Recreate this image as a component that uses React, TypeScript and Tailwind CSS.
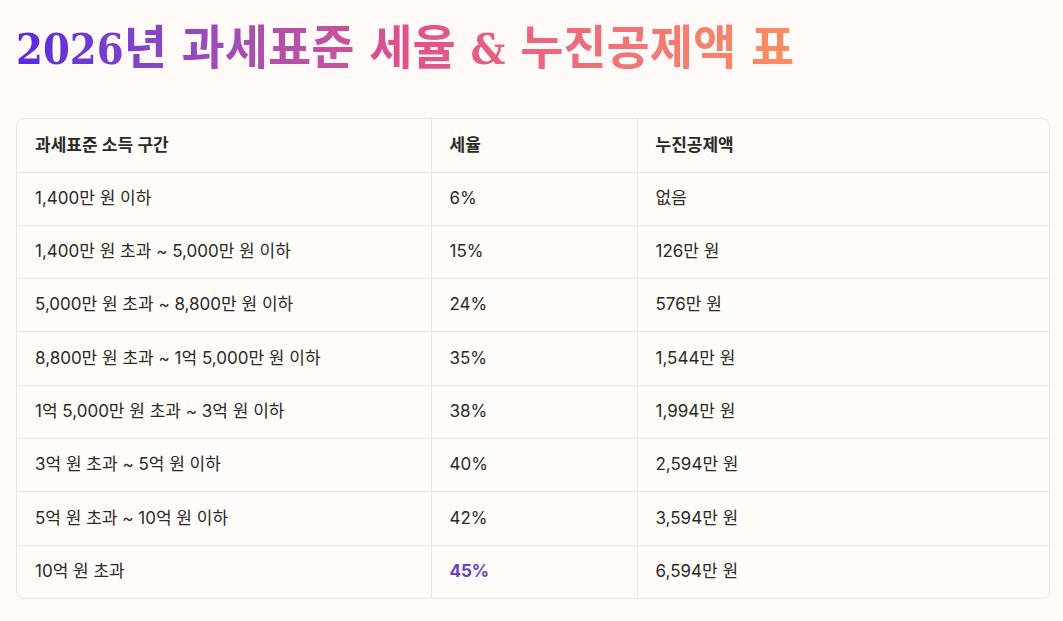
const rows: [string, string, string][] = [
  ["1,400만 원 이하", "6%", "없음"],
  ["1,400만 원 초과 ~ 5,000만 원 이하", "15%", "126만 원"],
  ["5,000만 원 초과 ~ 8,800만 원 이하", "24%", "576만 원"],
  ["8,800만 원 초과 ~ 1억 5,000만 원 이하", "35%", "1,544만 원"],
  ["1억 5,000만 원 초과 ~ 3억 원 이하", "38%", "1,994만 원"],
  ["3억 원 초과 ~ 5억 원 이하", "40%", "2,594만 원"],
  ["5억 원 초과 ~ 10억 원 이하", "42%", "3,594만 원"],
  ["10억 원 초과", "45%", "6,594만 원"],
];

export default function App() {
  return (
    <div
      className="min-h-screen bg-[#fffaf7] pl-4 pt-[16px] text-[#2b2926]"
      style={{ fontFamily: 'Inter, "Noto Sans CJK KR", sans-serif' }}
    >
      <h1
        className="inline-block bg-gradient-to-r from-[#5a24e0] via-[#e0508a] to-[#fb8d5f] bg-clip-text text-[47px] font-bold leading-[64px] text-transparent"
        style={{ fontFamily: '"DejaVu Serif Condensed", "DejaVu Serif", "Noto Sans CJK KR", serif' }}
      >
        <span className="text-[43px]">2026</span>년 과세표준 세율 <span className="text-[43px]">&amp;</span> 누진공제액 표
      </h1>

      <div className="mt-[37px] w-[1034px] overflow-hidden rounded-lg border border-[#ebe5e1] bg-[#fffbf9]">
        <table className="w-full table-fixed border-collapse text-[17px]">
          <colgroup>
            <col className="w-[414px]" />
            <col className="w-[206px]" />
            <col />
          </colgroup>
          <thead>
            <tr className="h-[53px] border-b border-[#ebe5e1]">
              <th className="px-[18px] text-left font-semibold">과세표준 소득 구간</th>
              <th className="border-l border-[#ebe5e1] px-[18px] text-left font-semibold">세율</th>
              <th className="border-l border-[#ebe5e1] px-[18px] text-left font-semibold">누진공제액</th>
            </tr>
          </thead>
          <tbody>
            {rows.map((r, i) => {
              const last = i === rows.length - 1;
              return (
                <tr key={i} className={last ? "h-[53.3px]" : "h-[53.3px] border-b border-[#ebe5e1]"}>
                  <td className="px-[18px]">{r[0]}</td>
                  <td
                    className={
                      last
                        ? "border-l border-[#ebe5e1] px-[18px] font-bold text-[#6a3fc8]"
                        : "border-l border-[#ebe5e1] px-[18px]"
                    }
                  >
                    {r[1]}
                  </td>
                  <td className="border-l border-[#ebe5e1] px-[18px]">{r[2]}</td>
                </tr>
              );
            })}
          </tbody>
        </table>
      </div>
    </div>
  );
}
